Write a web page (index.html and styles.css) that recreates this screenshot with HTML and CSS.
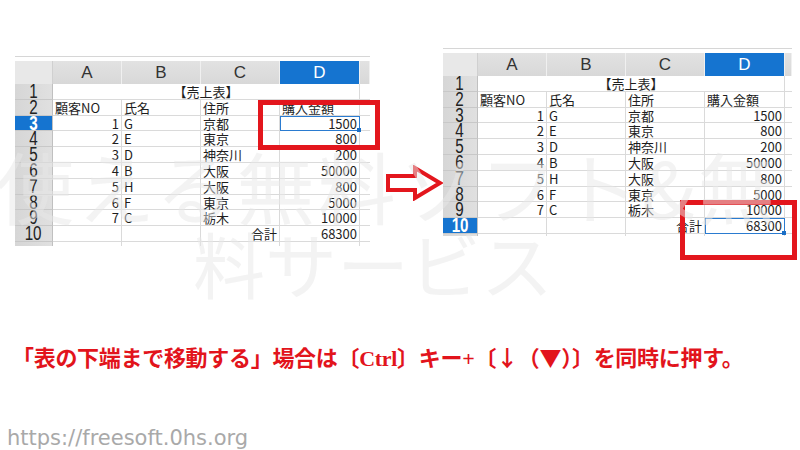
FILE: index.html
```html
<!DOCTYPE html>
<html lang="ja">
<head>
<meta charset="utf-8">
<title>表の下端まで移動</title>
<link rel="stylesheet" href="styles.css">
</head>
<body>
<div class="page">
  <div class="sheets">
    <div class="sheet sheet-left">
      <div class="grid grid-left">
        <div class="corner"></div><div class="h">A</div><div class="h">B</div><div class="h">C</div><div class="h sel">D</div><div class="h"></div>
        <div class="rn"><span>1</span></div><div class="c title">【売上表】</div><div class="c e"></div>
        <div class="rn"><span>2</span></div><div class="c">顧客NO</div><div class="c">氏名</div><div class="c">住所</div><div class="c">購入金額</div><div class="c e"></div>
        <div class="rn sel"><span>3</span></div><div class="c r">1</div><div class="c">G</div><div class="c">京都</div><div class="c r selcell">1500</div><div class="c e"></div>
        <div class="rn"><span>4</span></div><div class="c r">2</div><div class="c">E</div><div class="c">東京</div><div class="c r">800</div><div class="c e"></div>
        <div class="rn"><span>5</span></div><div class="c r">3</div><div class="c">D</div><div class="c">神奈川</div><div class="c r">200</div><div class="c e"></div>
        <div class="rn"><span>6</span></div><div class="c r">4</div><div class="c">B</div><div class="c">大阪</div><div class="c r">50000</div><div class="c e"></div>
        <div class="rn"><span>7</span></div><div class="c r">5</div><div class="c">H</div><div class="c">大阪</div><div class="c r">800</div><div class="c e"></div>
        <div class="rn"><span>8</span></div><div class="c r">6</div><div class="c">F</div><div class="c">東京</div><div class="c r">5000</div><div class="c e"></div>
        <div class="rn"><span>9</span></div><div class="c r">7</div><div class="c">C</div><div class="c">栃木</div><div class="c r">10000</div><div class="c e"></div>
        <div class="rn"><span>10</span></div><div class="c"></div><div class="c"></div><div class="c r">合計</div><div class="c r">68300</div><div class="c e"></div>
        <div class="rn cut"></div><div class="c cut"></div><div class="c cut"></div><div class="c cut"></div><div class="c cut"></div><div class="c cut e"></div>
      </div>
      <div class="redbox redbox-left"></div>
    </div>

    <svg class="arrow" viewBox="0 0 57 36" width="57" height="36" aria-hidden="true">
      <polygon points="2,11 29,11 29,3 54,18 29,33 29,25 2,25" fill="#fff" stroke="#e3161d" stroke-width="4" stroke-linejoin="miter"/>
    </svg>

    <div class="sheet sheet-right">
      <div class="grid grid-right">
        <div class="corner"></div><div class="h">A</div><div class="h">B</div><div class="h">C</div><div class="h sel">D</div><div class="h"></div>
        <div class="rn"><span>1</span></div><div class="c title">【売上表】</div><div class="c e"></div>
        <div class="rn"><span>2</span></div><div class="c">顧客NO</div><div class="c">氏名</div><div class="c">住所</div><div class="c">購入金額</div><div class="c e"></div>
        <div class="rn"><span>3</span></div><div class="c r">1</div><div class="c">G</div><div class="c">京都</div><div class="c r">1500</div><div class="c e"></div>
        <div class="rn"><span>4</span></div><div class="c r">2</div><div class="c">E</div><div class="c">東京</div><div class="c r">800</div><div class="c e"></div>
        <div class="rn"><span>5</span></div><div class="c r">3</div><div class="c">D</div><div class="c">神奈川</div><div class="c r">200</div><div class="c e"></div>
        <div class="rn"><span>6</span></div><div class="c r">4</div><div class="c">B</div><div class="c">大阪</div><div class="c r">50000</div><div class="c e"></div>
        <div class="rn"><span>7</span></div><div class="c r">5</div><div class="c">H</div><div class="c">大阪</div><div class="c r">800</div><div class="c e"></div>
        <div class="rn"><span>8</span></div><div class="c r">6</div><div class="c">F</div><div class="c">東京</div><div class="c r">5000</div><div class="c e"></div>
        <div class="rn"><span>9</span></div><div class="c r">7</div><div class="c">C</div><div class="c">栃木</div><div class="c r">10000</div><div class="c e"></div>
        <div class="rn sel"><span>10</span></div><div class="c"></div><div class="c"></div><div class="c r">合計</div><div class="c r selcell">68300</div><div class="c e"></div>
        <div class="rn cut"></div><div class="c cut"></div><div class="c cut"></div><div class="c cut"></div><div class="c cut"></div><div class="c cut e"></div>
      </div>
      <div class="redbox redbox-right"></div>
    </div>
  </div>

  <p class="caption">「表の下端まで移動する」場合は〔Ctrl〕キー+〔<span class="cjk">↓（▼）</span>〕を同時に押す。</p>
  <p class="footer">https://freesoft.0hs.org</p>

  <div class="wm" aria-hidden="true">
    <span class="wm1">使える無料ソフト&amp;無</span>
    <span class="wm2">料サービス</span>
  </div>
</div>
</body>
</html>
```

FILE: styles.css
```css
* { box-sizing: border-box; }

body {
  margin: 0;
  background: #fff;
  font-family: "Noto Sans CJK JP", sans-serif;
}

.page {
  position: relative;
  width: 800px;
  height: 450px;
  overflow: hidden;
}

.sheets {
  display: flex;
  align-items: flex-start;
  height: 341px;
}

.sheet {
  position: relative;
  border-top: 1px solid #d6d6d6;
  padding-top: 4px;
}

.sheet-left {
  margin-left: 15px;
  margin-top: 56px;
}

.sheet-right {
  margin-top: 48px;
}

.arrow {
  display: block;
  margin-left: 16px;
  margin-top: 165px;
}

.grid {
  display: grid;
  grid-template-rows: 23px repeat(10, 15.8px);
}

.grid-left {
  grid-template-columns: 38px 69px 79px 79px 80px 10px;
  grid-auto-rows: 4px;
}

.grid-right {
  grid-template-columns: 35px 69px 79px 79px 80px 7px;
  grid-auto-rows: 2px;
}

.corner {
  background: #e8e8e8;
  border-right: 1px solid #d0d0d0;
}

.h {
  background: linear-gradient(#e2e2e2, #d8d8d8);
  border-right: 1px solid #f0f0f0;
  font-family: "Liberation Sans", sans-serif;
  font-size: 17px;
  line-height: 23px;
  text-align: center;
  color: #333;
}

.h.sel {
  background: #1574d0;
  color: #fff;
}

.rn {
  background: linear-gradient(90deg, #d6d6d6, #e0e0e0);
  border-bottom: 1px solid #c8c8c8;
  border-right: 1px solid #c0c0c0;
  font-family: "Liberation Sans", sans-serif;
  font-size: 20px;
  line-height: 15px;
  text-align: center;
  color: #222;
}

.rn span {
  display: inline-block;
  transform: scaleX(0.76);
}

.rn.sel {
  background: #1574d0;
  color: #fff;
  font-weight: bold;
}

.c {
  border-right: 1px solid #dadada;
  border-bottom: 1px solid #dadada;
  font-size: 13px;
  line-height: 15px;
  padding: 0 2px;
  white-space: nowrap;
  color: #1e1e1e;
}

.c.r { text-align: right; }

.c.e { border-right: none; }

.cut { border-bottom: none; }

.title {
  grid-column: 2 / span 4;
  text-align: center;
}

.selcell {
  position: relative;
  outline: 1px solid #2a7bd0;
  outline-offset: -1px;
}

.selcell::after {
  content: "";
  position: absolute;
  right: -2px;
  bottom: -2px;
  width: 4px;
  height: 4px;
  background: #1a6fc6;
}

.redbox {
  position: absolute;
  border: 5px solid #e3161d;
}

.redbox-left {
  left: 243px;
  top: 43px;
  width: 122px;
  height: 50px;
}

.redbox-right {
  left: 237px;
  top: 151px;
  width: 117px;
  height: 60px;
}

.caption {
  margin: 0 0 0 12px;
  font-family: "Liberation Serif", "Noto Sans CJK JP", serif;
  font-size: 22px;
  line-height: 30px;
  font-weight: bold;
  letter-spacing: -0.3px;
  color: #e2141c;
  white-space: nowrap;
}

.caption .cjk {
  font-family: "Noto Sans CJK JP", sans-serif;
}

.footer {
  margin: 49px 0 0 7px;
  font-family: "DejaVu Sans", sans-serif;
  font-size: 21px;
  line-height: 30px;
  color: #a9a9a9;
}

.wm {
  position: absolute;
  inset: 0;
  pointer-events: none;
  font-family: "Noto Sans CJK JP", sans-serif;
  line-height: 1;
  color: rgba(232, 232, 232, 0.5);
  white-space: nowrap;
}

.wm1 {
  position: absolute;
  left: -4px;
  top: 146px;
  font-size: 78px;
  letter-spacing: 3px;
}

.wm2 {
  position: absolute;
  left: 193px;
  top: 226px;
  font-size: 72px;
}
```
